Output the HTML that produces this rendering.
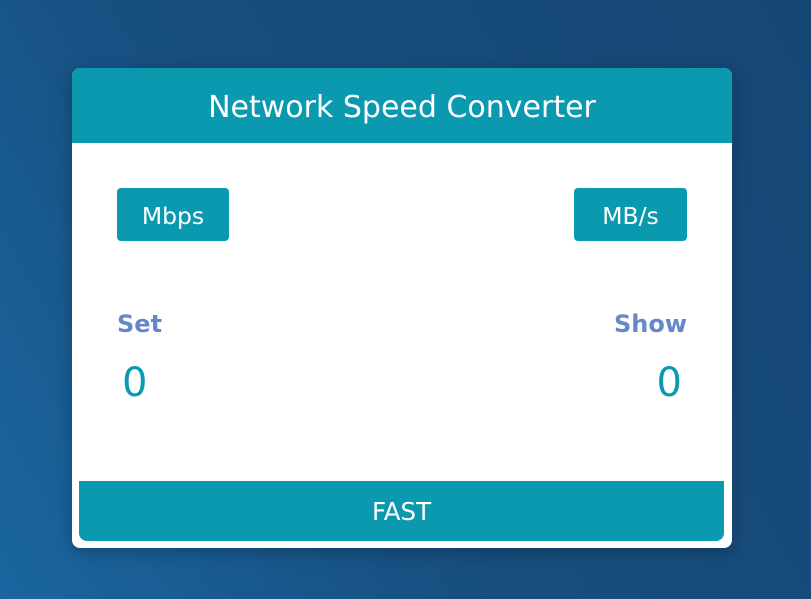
<!DOCTYPE html>
<html><head><style>
body{margin:0;width:811px;height:599px;overflow:hidden;background:linear-gradient(60deg,#1a66a0 0%,#174f80 40%,#164674 100%);font-family:"DejaVu Sans","Liberation Sans",sans-serif;position:relative}
.card{position:absolute;left:72px;top:68px;width:660px;height:480px;background:#fff;border-radius:8px;overflow:hidden;box-shadow:0 4px 16px rgba(0,0,0,.25)}
.hd{height:75px;background:#0b99b0;color:#fff;font-size:30px;text-align:center;line-height:79px}
.btn{position:absolute;top:120px;height:53px;width:112px;background:#0b99b0;color:#fff;border-radius:4px;font-size:23.5px;text-align:center;line-height:56px}
.lbl{position:absolute;top:242px;font-size:24px;font-weight:bold;color:#6688c6}
.val{position:absolute;top:292px;font-size:40px;color:#0b99b0}
.fast{position:absolute;left:7px;top:413px;width:645px;height:60px;background:#0b99b0;color:#fff;font-size:24.5px;text-align:center;line-height:62px;border-radius:0 0 8px 8px}
</style></head><body>
<div class="card">
<div class="hd">Network Speed Converter</div>
<div class="btn" style="left:45px">Mbps</div>
<div class="btn" style="left:502px;width:113px">MB/s</div>
<div class="lbl" style="left:45px">Set</div>
<div class="lbl" style="right:45px">Show</div>
<div class="val" style="left:50px">0</div>
<div class="val" style="right:50px">0</div>
<div class="fast">FAST</div>
</div>
</body></html>
